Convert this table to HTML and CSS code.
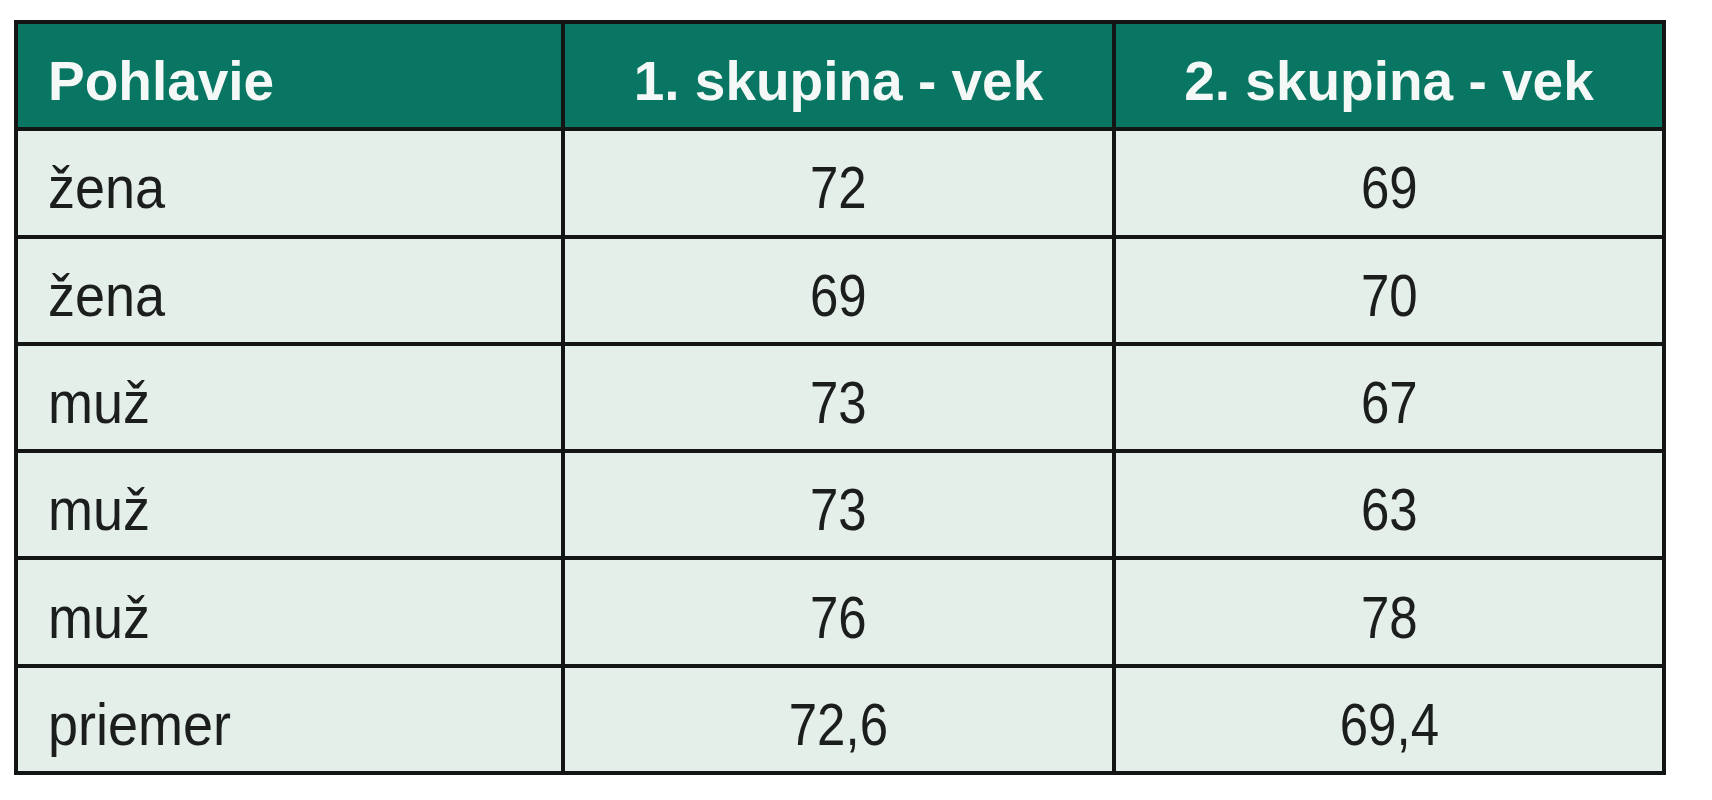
FILE: index.html
```html
<!DOCTYPE html>
<html lang="sk">
<head>
<meta charset="utf-8">
<title>Tabuľka</title>
<link rel="stylesheet" href="styles.css">
</head>
<body>
<table class="data">
  <colgroup>
    <col class="c1">
    <col class="c2">
    <col class="c3">
  </colgroup>
  <thead>
    <tr><th class="lbl">Pohlavie</th><th>1. skupina - vek</th><th>2. skupina - vek</th></tr>
  </thead>
  <tbody>
    <tr><td class="lbl"><span class="t">žena</span></td><td><span class="t">72</span></td><td><span class="t">69</span></td></tr>
    <tr><td class="lbl"><span class="t">žena</span></td><td><span class="t">69</span></td><td><span class="t">70</span></td></tr>
    <tr><td class="lbl"><span class="t">muž</span></td><td><span class="t">73</span></td><td><span class="t">67</span></td></tr>
    <tr><td class="lbl"><span class="t">muž</span></td><td><span class="t">73</span></td><td><span class="t">63</span></td></tr>
    <tr><td class="lbl"><span class="t">muž</span></td><td><span class="t">76</span></td><td><span class="t">78</span></td></tr>
    <tr><td class="lbl"><span class="t">priemer</span></td><td><span class="t">72,6</span></td><td><span class="t">69,4</span></td></tr>
  </tbody>
</table>
</body>
</html>
```
FILE: styles.css
```css
html, body {
  margin: 0;
  padding: 0;
  background: #ffffff;
}
body {
  padding: 20px 0 0 14px;
}
.data {
  border-collapse: separate;
  border-spacing: 0;
  border-top: 4px solid #121513;
  border-left: 4px solid #121513;
  table-layout: fixed;
  width: 1652px;
}
.c1 { width: 547px; }
.c2 { width: 551px; }
.c3 { width: 550px; }
.data th,
.data td {
  border-right: 4px solid #121513;
  border-bottom: 4px solid #121513;
  height: 107.3px;
  box-sizing: border-box;
  padding: 10px 0 0 0;
  text-align: center;
  vertical-align: middle;
  white-space: nowrap;
}
.data th {
  background: #087662;
  color: #f4f8f6;
  font-family: "Liberation Sans", Arial, sans-serif;
  font-weight: 700;
  font-size: 55px;
}
.data td {
  background: #e5efea;
  color: #1b1e1c;
  font-family: "Liberation Sans", Arial, sans-serif;
  font-weight: 400;
  font-size: 60px;
}
.data .t {
  display: inline-block;
  transform: scaleX(0.85);
  transform-origin: center;
}
.data .lbl {
  text-align: left;
  padding-left: 30px;
}
.data .lbl .t {
  transform: scaleX(0.9);
  transform-origin: left center;
}
```
